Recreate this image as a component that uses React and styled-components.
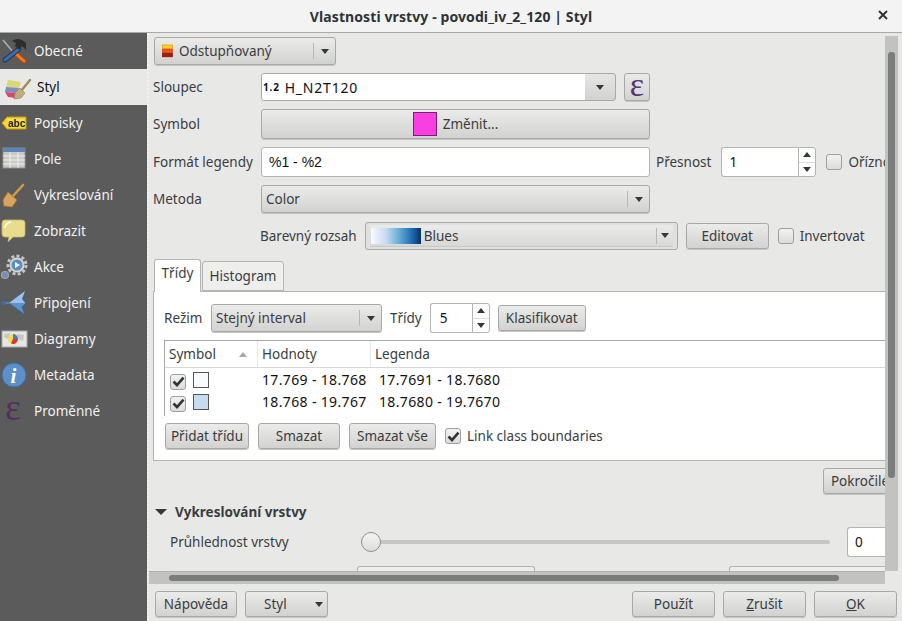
import React from "react"
import styled, { createGlobalStyle } from "styled-components"

const GlobalStyle = createGlobalStyle`
  html, body { margin: 0; padding: 0; }
  body {
    width: 902px;
    height: 621px;
    overflow: hidden;
    background: #e8e8e6;
    font-family: "Noto Sans", "Liberation Sans", sans-serif;
    font-size: 13.5px;
    color: #3a3d3f;
  }
`

const Window = styled.div`
  width: 902px;
  height: 621px;
  display: flex;
  flex-direction: column;
`

const TitleBar = styled.div`
  flex: 0 0 33px;
  box-sizing: border-box;
  position: relative;
  display: flex;
  align-items: center;
  justify-content: center;
  background: #f3f3f3;
  border-bottom: 1px solid #a9a9a7;
  font-weight: 700;
  font-size: 14px;
  letter-spacing: 0.1px;
  color: #2e3436;
`

const CloseGlyph = styled.svg`
  position: absolute;
  right: 14px;
  top: 10px;
`

const Body = styled.div`
  flex: 1;
  display: flex;
  min-height: 0;
`

const Sidebar = styled.nav`
  flex: 0 0 147px;
  background: #5b5b5b;
  display: flex;
  flex-direction: column;
`

const SideItem = styled.div`
  height: 36px;
  display: flex;
  align-items: center;
  gap: ${props => props.$active ? "9px" : "6px"};
  background: ${props => props.$active ? "#e8e8e6" : "transparent"};
  color: ${props => props.$active ? "#111" : "#f1f1f1"};
`

const SideIcon = styled.svg`
  flex: 0 0 28px;
  overflow: visible;
`

const Main = styled.main`
  flex: 1;
  min-width: 0;
  display: flex;
  flex-direction: column;
  border-left: 2px dotted #f2f2f0;
`

const ScrollArea = styled.div`
  flex: 0 0 538px;
  display: flex;
  min-height: 0;
`

const Viewport = styled.div`
  width: 736px;
  overflow: hidden;
`

const Content = styled.div`
  width: 900px;
  box-sizing: border-box;
  padding: 4px 0 0 5px;
`

const VScroll = styled.div`
  flex: 0 0 13px;
  margin-top: 3px;
  box-sizing: border-box;
  padding: 16px 3px 0;
  background: #c2c2c0;
`

const VThumb = styled.div`
  height: 426px;
  border-radius: 3px;
  background: #7b7d7d;
`

const HScroll = styled.div`
  flex: 0 0 13px;
  width: 736px;
  box-sizing: border-box;
  padding: 3px 0 0 20px;
  background: #c2c2c0;
  border-top: 1px solid #b0b0ae;
`

const HThumb = styled.div`
  width: 670px;
  height: 6px;
  border-radius: 3px;
  background: #7b7d7d;
`

const BottomBar = styled.div`
  flex: 1;
  display: flex;
  align-items: flex-start;
  padding: 7px 5px 0 6px;
  gap: 8px;
`

const Spacer = styled.div`
  flex: 1;
`

const Button = styled.div`
  box-sizing: border-box;
  width: ${props => props.$w ? props.$w + "px" : "auto"};
  height: ${props => (props.$h || 26) + "px"};
  flex: none;
  display: flex;
  align-items: center;
  justify-content: ${props => props.$between ? "space-between" : "center"};
  margin-left: ${props => props.$ml || 0}px;
  padding: ${props => props.$between ? "0 4px 0 18px" : "0"};
  border: 1px solid #a8a8a6;
  border-radius: 3px;
  background: linear-gradient(#ebebe9, #d2d2d0);
  box-shadow: 0 1px 0 #c4c4c2;
  white-space: nowrap;
  color: #3a3d3f;
`

const Arrow = styled.span`
  display: inline-block;
  width: 0;
  height: 0;
  border-left: ${props => props.$s || 4.5}px solid transparent;
  border-right: ${props => props.$s || 4.5}px solid transparent;
  border-${props => props.$up ? "bottom" : "top"}: ${props => props.$s ? 6 : 5}px solid ${props => props.$color || "#33393b"};
`

const Combo = styled.div`
  box-sizing: border-box;
  width: ${props => props.$w}px;
  height: 28px;
  flex: none;
  display: flex;
  align-items: center;
  padding-left: ${props => props.$pad ?? 4}px;
  border: 1px solid #a8a8a6;
  border-radius: 3px;
  background: linear-gradient(#ebebe9, #d2d2d0);
  box-shadow: 0 1px 0 #c4c4c2;
  white-space: nowrap;
`

const ComboText = styled.span`
  flex: 1;
  display: flex;
  align-items: center;
  gap: ${props => props.$gap || 0}px;
`

const ComboArrow = styled.span`
  flex: 0 0 ${props => props.$w || 21}px;
  height: 16px;
  display: flex;
  align-items: center;
  justify-content: center;
  border-left: 1px solid #b8b8b6;
`

const FieldCombo = styled.div`
  box-sizing: border-box;
  width: 355px;
  height: 28px;
  flex: none;
  display: flex;
  align-items: stretch;
  border: 1px solid #a8a8a6;
  border-radius: 3px;
  background: linear-gradient(#e6e6e4, #d2d2d0);
  overflow: hidden;
`

const FieldValue = styled.div`
  flex: 1;
  display: flex;
  align-items: center;
  gap: 5px;
  padding-left: 1px;
  background: #fff;
  color: #111;
  font-size: 14px;
  letter-spacing: 0.8px;
`

const TypeTag = styled.span`
  font-size: 10px;
  font-weight: 700;
  letter-spacing: 0.8px;
`

const FieldArrow = styled.span`
  flex: 0 0 30px;
  display: flex;
  align-items: center;
  justify-content: center;
`

const Row = styled.div`
  display: flex;
  align-items: center;
  height: ${props => props.$h || 28}px;
  margin-top: ${props => props.$mt ?? 8}px;
  margin-left: ${props => props.$ml ?? -1}px;
`

const Label = styled.span`
  flex: 0 0 ${props => props.$w ? props.$w + "px" : "auto"};
  min-width: 0;
  margin-left: ${props => props.$ml || 0}px;
  margin-right: ${props => props.$mr || 0}px;
  white-space: nowrap;
`

const EpsGlyph = styled.span`
  font-family: "Liberation Serif", serif;
  font-size: 34px;
  line-height: 20px;
  height: 24px;
  color: #5a3370;
`

const Swatch = styled.span`
  width: 24px;
  height: 24px;
  margin-right: 6px;
  box-sizing: border-box;
  background: #f93fdf;
  border: 1px solid #7b1f6e;
`

const TextInput = styled.div`
  box-sizing: border-box;
  width: ${props => props.$w}px;
  height: 30px;
  flex: none;
  display: flex;
  align-items: center;
  padding-left: ${props => props.$pad || 7}px;
  background: #fff;
  border: 1px solid #b4b4b2;
  border-radius: 3px;
  color: #111;
`

const FormatInput = styled(TextInput)`
  font-family: "Liberation Sans", sans-serif;
  font-size: 14px;
`

const Spin = styled.div`
  flex: none;
  display: flex;
  height: 30px;
`

const SpinField = styled(TextInput)`
  height: 100%;
  border-radius: 3px 0 0 3px;
  border-right: 0;
`

const SpinButtons = styled.div`
  box-sizing: border-box;
  width: 18px;
  display: flex;
  flex-direction: column;
  background: #fff;
  border: 1px solid #b4b4b2;
  border-radius: 0 3px 3px 0;
`

const SpinStep = styled.div`
  flex: 1;
  display: flex;
  align-items: center;
  justify-content: center;
  & + & { border-top: 1px solid #dcdcda; }
`

const CheckBox = styled.span`
  box-sizing: border-box;
  width: 16px;
  height: 16px;
  flex: none;
  display: flex;
  align-items: center;
  justify-content: center;
  margin-left: ${props => props.$ml || 0}px;
  border: 1px solid #9f9f9d;
  border-radius: 3px;
  background: linear-gradient(#f2f2f0, #dcdcda);
`

const RampCombo = styled.div`
  box-sizing: border-box;
  width: 313px;
  height: 28px;
  flex: none;
  margin-right: 8px;
  padding: 2px 4px;
  display: flex;
  border: 1px solid #a8a8a6;
  border-radius: 3px;
  background: #e0e0de;
`

const RampInner = styled.div`
  flex: 1;
  display: flex;
  align-items: center;
  padding-left: 1px;
  border: 1px solid #c8c8c6;
  border-width: 0 0 1px;
  background: linear-gradient(#ebebe9, #d8d8d6);
`

const Ramp = styled.span`
  width: 50px;
  height: 16px;
  margin-right: 3px;
  background: linear-gradient(90deg, #f7fbff, #c6dbef 30%, #6baed6 55%, #2171b5 80%, #08306b);
`

const Tabs = styled.div`
  display: flex;
  align-items: flex-end;
  height: 32px;
  margin-top: 9px;
`

const Tab = styled.div`
  box-sizing: border-box;
  width: ${props => props.$w}px;
  height: ${props => props.$active ? "33px" : "30px"};
  margin-right: 1px;
  margin-bottom: ${props => props.$active ? "-1px" : "0"};
  padding-top: ${props => props.$active ? "4px" : "0"};
  position: relative;
  z-index: ${props => props.$active ? 1 : 0};
  display: flex;
  align-items: ${props => props.$active ? "flex-start" : "center"};
  justify-content: center;
  background: ${props => props.$active ? "#fff" : "#eeeeec"};
  border: 1px solid #b4b4b2;
  border-bottom: ${props => props.$active ? "0" : "1px solid #b4b4b2"};
  border-radius: 3px 3px 0 0;
`

const TabPanel = styled.div`
  box-sizing: border-box;
  width: 800px;
  height: 170px;
  margin-left: -1px;
  padding: 12px 0 0 10px;
  background: #fff;
  border: 1px solid #b4b4b2;
`

const ClassTable = styled.div`
  width: 790px;
  height: 76px;
  margin-top: 8px;
  box-sizing: border-box;
  border-top: 1px solid #a8a8a6;
  border-left: 1px solid #a8a8a6;
`

const TableHead = styled.div`
  display: flex;
  height: 26px;
  align-items: center;
  border-bottom: 1px solid #d8d8d6;
`

const HeadCell = styled.div`
  box-sizing: border-box;
  flex: ${props => props.$w ? `0 0 ${props.$w}px` : 1};
  height: 100%;
  display: flex;
  align-items: center;
  justify-content: space-between;
  padding: 0 10px 0 4px;
  border-right: ${props => props.$w ? "1px solid #e8e8e6" : "0"};
`

const TableRow = styled.div`
  display: flex;
  align-items: center;
  height: 22px;
  color: #111;
`

const SymbolCell = styled.div`
  flex: 0 0 97px;
  display: flex;
  align-items: center;
  gap: 7px;
  padding: 2px 0 0 5px;
  box-sizing: border-box;
`

const TableCheck = styled(CheckBox)`
  margin-top: 3px;
`

const ClassSwatch = styled.span`
  width: 16px;
  height: 16px;
  box-sizing: border-box;
  background: ${props => props.$color};
  border: 1px solid #555;
`

const ValueCell = styled.div`
  flex: 0 0 117px;
  white-space: nowrap;
  font-size: 14px;
  letter-spacing: 0.35px;
`

const Actions = styled.div`
  display: flex;
  align-items: center;
  gap: 9px;
  margin: 7px 0 0 1px;
`

const CheckLabel = styled.span`
  margin-left: ${props => props.$ml ?? 6}px;
  white-space: nowrap;
`

const RightAlign = styled.div`
  display: flex;
  margin: 7px 0 0 669px;
`

const SectionHead = styled.div`
  display: flex;
  align-items: center;
  gap: 8px;
  margin: 8px 0 0 1px;
  height: 20px;
  font-weight: 700;
`

const SliderTrack = styled.div`
  position: relative;
  flex: 0 0 469px;
  height: 4px;
  margin-left: 78px;
  margin-right: 17px;
  border-radius: 2px;
  background: #c6c6c4;
`

const SliderKnob = styled.span`
  position: absolute;
  left: 0;
  top: -8px;
  width: 20px;
  height: 20px;
  box-sizing: border-box;
  border: 1px solid #8f8f8d;
  border-radius: 50%;
  background: linear-gradient(#f4f4f2, #dededc);
`

const Peek = styled.div`
  box-sizing: border-box;
  width: ${props => props.$w}px;
  height: 8px;
  margin-left: ${props => props.$ml}px;
  border: 1px solid #b4b4b2;
  border-bottom: 0;
  border-radius: 3px 3px 0 0;
  background: #eeeeec;
`

const Check = () => (
  <svg width="13" height="13" viewBox="0 0 13 13">
    <path d="M1.5 6.5 L5 10 L11.5 2.6" fill="none" stroke="#2e3436" strokeWidth="2.6" />
  </svg>
)

const icons = {
  wrench: (
    <>
      <path d="M3 3 L14 16" stroke="#a6adb0" strokeWidth="1.6" />
      <path d="M14 15 L24 24" stroke="#b8430c" strokeWidth="5" strokeLinecap="round" />
      <path d="M14 15 L24 24" stroke="#f57a1d" strokeWidth="3" strokeLinecap="round" />
      <path d="M19 12 L5 23" stroke="#17365d" strokeWidth="5" strokeLinecap="round" />
      <path d="M19 12 L5 23" stroke="#3a6ea5" strokeWidth="3" strokeLinecap="round" />
      <path d="M12 4 C16 1 21 1 26 6 L26 13 L22 9 L19 13 L15 9 L16 6 Z" fill="#2c2f30" />
    </>
  ),
  style: (
    <>
      <path d="M8 7 L21 9 L19 15 L6 14 Z" fill="#d9d873" />
      <path d="M6 14 L19 15 L17 20 L5 19 Z" fill="#7b8fc7" />
      <path d="M5 19 L17 20 L15 25 L8 24 Z" fill="#d9486d" />
      <path d="M21 18 L30 7" stroke="#a08a5c" strokeWidth="2.4" strokeLinecap="round" />
      <path d="M15 20 L20 15 L25 20 L21 25 L14 26 Z" fill="#c2ab7c" stroke="#8f7c56" strokeWidth="0.6" />
    </>
  ),
  label: (
    <>
      <path d="M2 14 L7 8 L26 8 L26 20 L7 20 Z" fill="#f7d92e" stroke="#c49a0a" />
      <rect x="8" y="10" width="16" height="8" rx="1" fill="#f3e25d" />
      <text x="8" y="18" fontSize="10" fontWeight="700" fontFamily="Liberation Sans" fill="#222">abc</text>
    </>
  ),
  table: (
    <>
      <rect x="3" y="3" width="22" height="20" fill="#c9cbc6" stroke="#8d908b" />
      <rect x="3" y="3" width="22" height="4" fill="#5a84b8" />
      <path d="M3 11 H25 M3 15 H25 M3 19 H25 M10 7 V23 M18 7 V23" stroke="#eeeeea" strokeWidth="1" />
    </>
  ),
  brush: (
    <>
      <path d="M13 15 L23 4" stroke="#d39a45" strokeWidth="2.6" strokeLinecap="round" />
      <path d="M8 11 L17 19 L12 26 L4 25 L3 19 Z" fill="#d9a55a" stroke="#a9772f" strokeWidth="0.8" />
    </>
  ),
  bubble: (
    <>
      <path d="M5 3 H22 Q25 3 25 6 V17 Q25 20 22 20 H13 L8 25 L9 20 H5 Q2 20 2 17 V6 Q2 3 5 3 Z" fill="#e9dc8c" stroke="#c9b863" strokeWidth="0.8" />
      <path d="M5 11 Q5 6 11 5" stroke="#fff" strokeWidth="1.5" fill="none" />
    </>
  ),
  action: (
    <>
      <circle cx="17" cy="12" r="9" fill="none" stroke="#c3c3c1" strokeWidth="3" strokeDasharray="3 2.2" />
      <circle cx="17" cy="12" r="7.5" fill="#d4d4d2" />
      <circle cx="17" cy="12" r="5.5" fill="#5a8cc6" />
      <path d="M15 9 L20 12 L15 15 Z" fill="#fff" />
      <circle cx="5" cy="22" r="3.5" fill="#6d8fb8" stroke="#a4a4a2" strokeWidth="1.2" />
    </>
  ),
  join: (
    <>
      <path d="M3 14 H10" stroke="#7fa5d0" strokeWidth="1" />
      <circle cx="3.5" cy="14" r="2.4" fill="#3f6ea3" />
      <path d="M9 14 L25 2 L22 10 L26 14 L22 18 L25 26 Z" fill="#5d92cc" stroke="#2f5a8f" strokeWidth="0.6" />
      <path d="M9 14 L25 14 L22 10 L25 2 Z" fill="#9cc0e6" />
    </>
  ),
  chart: (
    <>
      <rect x="2" y="6" width="25" height="16" fill="#e6e6e2" stroke="#a8a8a4" />
      <path d="M4 9 L10 8 L8 14 L4 12 Z M17 9 L24 10 L23 16 L18 14 Z" fill="#c4c7c2" />
      <circle cx="13" cy="14" r="5" fill="#eedc5a" />
      <path d="M13 14 L18 14 A5 5 0 0 1 11 18.6 Z" fill="#d33" />
      <path d="M13 14 L13 9 A5 5 0 0 1 18 14 Z" fill="#4a78c2" />
    </>
  ),
  info: (
    <>
      <circle cx="14" cy="14" r="12" fill="#5d8fcb" stroke="#3f6ea3" />
      <text x="10.5" y="22" fontSize="21" fontWeight="700" fontStyle="italic" fontFamily="Liberation Serif" fill="#fff">i</text>
    </>
  ),
  epsilon: (
    <text x="5" y="23" fontSize="38" fontFamily="Liberation Serif" fill="#51305f">ε</text>
  ),
}

const sideItems = [
  ["wrench", "Obecné"],
  ["style", "Styl"],
  ["label", "Popisky"],
  ["table", "Pole"],
  ["brush", "Vykreslování"],
  ["bubble", "Zobrazit"],
  ["action", "Akce"],
  ["join", "Připojení"],
  ["chart", "Diagramy"],
  ["info", "Metadata"],
  ["epsilon", "Proměnné"],
]

const classes = [
  ["#f7fbff", "17.769 - 18.768", "17.7691 - 18.7680"],
  ["#c6dbef", "18.768 - 19.767", "18.7680 - 19.7670"],
]

function SpinBox({ value, width, pad }) {
  return (
    <Spin>
      <SpinField $w={width} $pad={pad}>{value}</SpinField>
      <SpinButtons>
        <SpinStep><Arrow $up /></SpinStep>
        <SpinStep><Arrow /></SpinStep>
      </SpinButtons>
    </Spin>
  )
}

export default function App() {
  return (
    <Window>
      <GlobalStyle />
      <TitleBar>
        Vlastnosti vrstvy - povodi_iv_2_120 | Styl
        <CloseGlyph width="10" height="10" viewBox="0 0 10 10">
          <path d="M1 1 L9 9 M9 1 L1 9" stroke="#2e3436" strokeWidth="2" />
        </CloseGlyph>
      </TitleBar>
      <Body>
        <Sidebar>
          {sideItems.map(([icon, label]) => (
            <SideItem key={label} $active={label === "Styl"}>
              <SideIcon width="28" height="28" viewBox="0 0 28 28">{icons[icon]}</SideIcon>
              {label}
            </SideItem>
          ))}
        </Sidebar>
        <Main>
          <ScrollArea>
            <Viewport>
              <Content>
                <Combo $w={182} $pad={7}>
                  <ComboText $gap={6}>
                    <svg width="11" height="14" viewBox="0 0 11 14">
                      <rect x="0.5" y="1" width="10" height="3.4" fill="#ffd21f" stroke="#e89a00" strokeWidth="0.7" />
                      <rect x="0.5" y="5.2" width="10" height="3.4" fill="#f2541b" stroke="#c8350b" strokeWidth="0.7" />
                      <rect x="0.5" y="9.4" width="10" height="3.4" fill="#a81a08" stroke="#7a1004" strokeWidth="0.7" />
                    </svg>
                    Odstupňovaný
                  </ComboText>
                  <ComboArrow><Arrow /></ComboArrow>
                </Combo>
                <Row>
                  <Label $w={108}>Sloupec</Label>
                  <FieldCombo>
                    <FieldValue><TypeTag>1.2</TypeTag>H_N2T120</FieldValue>
                    <FieldArrow><Arrow /></FieldArrow>
                  </FieldCombo>
                  <Button $w={26} $h={28} $ml={8}><EpsGlyph>ε</EpsGlyph></Button>
                </Row>
                <Row $h={30}>
                  <Label $w={108}>Symbol</Label>
                  <Button $w={389} $h={30}><Swatch />Změnit...</Button>
                </Row>
                <Row $h={30}>
                  <Label $w={108}>Formát legendy</Label>
                  <FormatInput $w={389}>%1 - %2</FormatInput>
                  <Label $ml={6} $mr={10}>Přesnost</Label>
                  <SpinBox value="1" width={77} />
                  <CheckBox $ml={10} />
                  <CheckLabel>Oříznout</CheckLabel>
                </Row>
                <Row>
                  <Label $w={108}>Metoda</Label>
                  <Combo $w={389}>
                    <ComboText>Color</ComboText>
                    <ComboArrow><Arrow /></ComboArrow>
                  </Combo>
                </Row>
                <Row $mt={9}>
                  <Label $ml={107} $mr={8}>Barevný rozsah</Label>
                  <RampCombo>
                    <RampInner>
                      <ComboText><Ramp />Blues</ComboText>
                      <ComboArrow $w={16}><Arrow /></ComboArrow>
                    </RampInner>
                  </RampCombo>
                  <Button $w={83}>Editovat</Button>
                  <CheckBox $ml={9} />
                  <CheckLabel>Invertovat</CheckLabel>
                </Row>
                <Tabs>
                  <Tab $w={47} $active>Třídy</Tab>
                  <Tab $w={82}>Histogram</Tab>
                </Tabs>
                <TabPanel>
                  <Row $mt={0} $ml={0}>
                    <Label $w={47}>Režim</Label>
                    <Combo $w={171}>
                      <ComboText>Stejný interval</ComboText>
                      <ComboArrow><Arrow /></ComboArrow>
                    </Combo>
                    <Label $ml={8} $mr={8}>Třídy</Label>
                    <SpinBox value="5" width={42} pad={9} />
                    <Button $w={88} $ml={8}>Klasifikovat</Button>
                  </Row>
                  <ClassTable>
                    <TableHead>
                      <HeadCell $w={93}>Symbol<Arrow $up $color="#a8a8a6" /></HeadCell>
                      <HeadCell $w={113}>Hodnoty</HeadCell>
                      <HeadCell>Legenda</HeadCell>
                    </TableHead>
                    {classes.map(([color, values, legend]) => (
                      <TableRow key={values}>
                        <SymbolCell>
                          <TableCheck><Check /></TableCheck>
                          <ClassSwatch $color={color} />
                        </SymbolCell>
                        <ValueCell>{values}</ValueCell>
                        <ValueCell>{legend}</ValueCell>
                      </TableRow>
                    ))}
                  </ClassTable>
                  <Actions>
                    <Button $w={84}>Přidat třídu</Button>
                    <Button $w={82}>Smazat</Button>
                    <Button $w={87}>Smazat vše</Button>
                    <CheckBox><Check /></CheckBox>
                    <CheckLabel $ml={-3}>Link class boundaries</CheckLabel>
                  </Actions>
                </TabPanel>
                <RightAlign><Button $w={74}>Pokročilé</Button></RightAlign>
                <SectionHead><Arrow $s={6} />Vykreslování vrstvy</SectionHead>
                <Row $mt={5} $h={30} $ml={16}>
                  <Label $w={113}>Průhlednost vrstvy</Label>
                  <SliderTrack><SliderKnob /></SliderTrack>
                  <SpinBox value="0" width={60} />
                </Row>
                <Row $mt={9} $h={8} $ml={0}>
                  <Peek $w={178} $ml={203} />
                  <Peek $w={178} $ml={194} />
                </Row>
              </Content>
            </Viewport>
            <VScroll><VThumb /></VScroll>
          </ScrollArea>
          <HScroll><HThumb /></HScroll>
          <BottomBar>
            <Button $w={82}>Nápověda</Button>
            <Button $w={83} $between><span>Styl</span><Arrow /></Button>
            <Spacer />
            <Button $w={83}>Použít</Button>
            <Button $w={83}><span><u>Z</u>rušit</span></Button>
            <Button $w={83}><span><u>O</u>K</span></Button>
          </BottomBar>
        </Main>
      </Body>
    </Window>
  )
}
